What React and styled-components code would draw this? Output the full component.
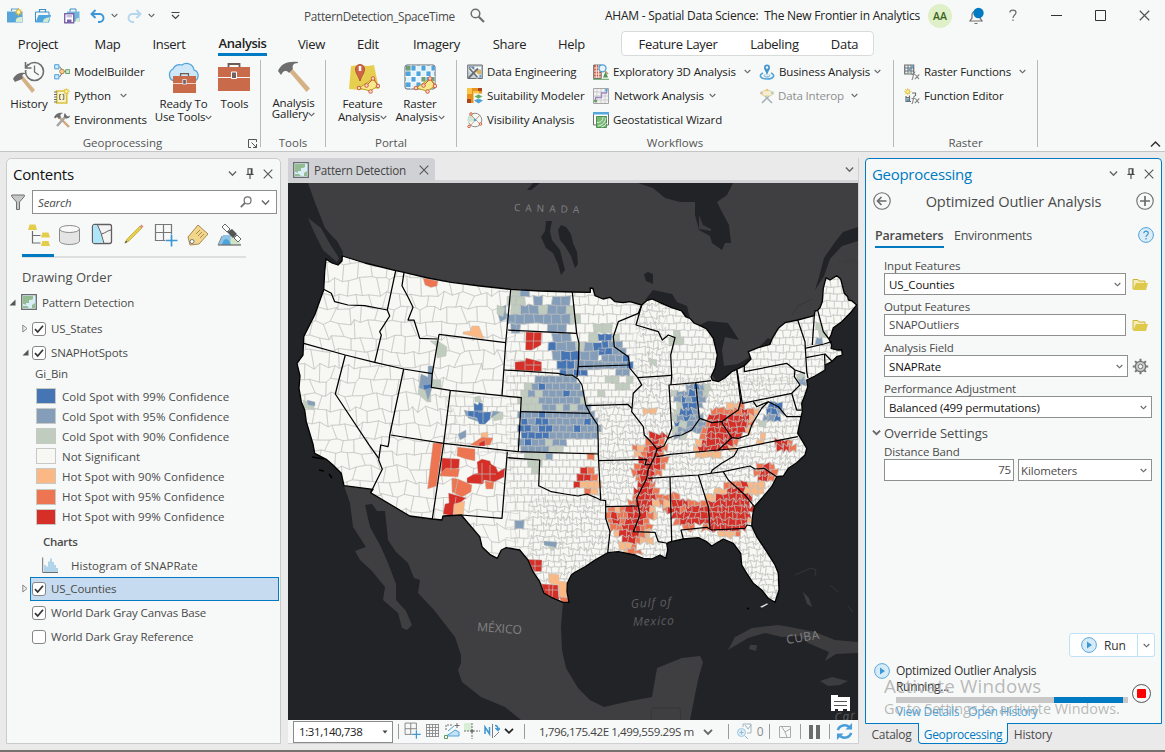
import React from "react";
import styled, { createGlobalStyle, css } from "styled-components";

const Global = createGlobalStyle`
  * { box-sizing: border-box; }
  html, body { margin: 0; padding: 0; }
  body {
    width: 1165px; height: 752px; overflow: hidden;
    font-family: "Open Sans", "Noto Sans", sans-serif;
    font-size: 11.5px; letter-spacing: -0.14px; color: #222; background: #f7f9f8;
  }
  svg { flex: none; }
`;

/* ---------- frame ---------- */
const Window = styled.div`
  width: 1165px; height: 752px; display: flex; flex-direction: column;
  background: #f7f9f8; border-bottom: 2px solid #77716f; white-space: nowrap;
`;
const TitleBar = styled.header`height: 31px; display: flex; align-items: center; flex: none; padding-left: 7px;`;
const Quick = styled.div`display: flex; align-items: center; width: ${p => p.$w}px; height: 31px; flex: none;`;
const ProjectName = styled.div`width: 166px; font-size: 11.8px; letter-spacing: -0.3px; color: #4b4b4b; flex: none;`;
const Portal = styled.div`width: 323px; font-size: 12px; letter-spacing: -0.24px; color: #222; white-space: pre; flex: none; margin-left: 120px;`;
const Avatar = styled.div`
  width: 24px; height: 24px; border-radius: 50%; background: #dff0c8; color: #37611c;
  font-size: 10.5px; font-weight: 600; display: grid; place-items: center; flex: none; letter-spacing: 0;
`;
const WinButton = styled.div`width: ${p => p.$w || 44}px; display: grid; place-items: center; flex: none;`;

const TabStrip = styled.nav`height: 29px; display: flex; flex: none;`;
const Tab = styled.div`
  display: flex; justify-content: center; align-items: center; flex: none; height: 26px;
  width: ${p => p.$w}px; margin-left: ${p => p.$gap}px; font-size: 13px; letter-spacing: -0.3px;
  ${p => p.$on && css`font-weight: 600; height: 25px; border-bottom: 3px solid #007ac2; letter-spacing: -0.4px; padding-top: 2px;`}
`;
const ContextTabs = styled.div`
  margin-left: 36px; width: 253px; height: 25px; display: flex; background: #fff;
  border: 1px solid #d9dbda; border-radius: 4px; align-self: flex-start;
`;
const ContextTab = styled(Tab)`height: 23px;`;

const Ribbon = styled.div`height: 92px; display: flex; flex: none; border-bottom: 1px solid #c4c4c4; position: relative;`;
const Group = styled.section`width: ${p => p.$w}px; height: 87px; display: flex; flex-direction: column; flex: none; border-right: 1px solid #b9b9b9; position: relative;`;
const GroupBody = styled.div`height: 73px; display: flex; flex: none;`;
const GroupName = styled.div`height: 18px; line-height: 18px; margin-top: 1px; text-align: center; color: #555; letter-spacing: 0; padding-right: ${p => p.$shift || 0}px;`;
const BigButton = styled.div`
  width: ${p => p.$w}px; margin-left: ${p => p.$ml || 0}px; display: flex; flex-direction: column; align-items: center; flex: none;
  text-align: center; padding-top: 1px;
`;
const BigText = styled.div`margin-top: ${p => p.$t ?? 3}px; line-height: ${p => p.$lh || 13}px; white-space: pre;`;
const Column = styled.div`width: ${p => p.$w}px; margin-left: ${p => p.$ml || 0}px; flex: none;`;
const SmallButton = styled.div`
  height: 24px; display: flex; align-items: center; padding-bottom: 1px; color: ${p => (p.$off ? "#8d8d8d" : "#222")};
  span { width: ${p => p.$tw || "auto"}; margin-left: ${p => p.$tm || 4}px; flex: none; }
`;
const Launcher = styled.div`position: absolute; right: 3px; bottom: -1px; line-height: 0;`;
const Collapse = styled.div`position: absolute; right: 4px; bottom: 3px; line-height: 0;`;

const Workspace = styled.main`height: 598px; flex: 1; display: flex; background: #eaeaea; padding: 6px 3px 6px 6px;`;

/* ---------- contents pane ---------- */
const Contents = styled.aside`width: 275px; border: 1px solid #cbcbcb; border-radius: 5px 5px 0 0; background: #f7f9f8; flex: none; color: #4b4b4b;`;
const PaneHead = styled.div`height: 29px; display: flex; align-items: center; padding: 0 ${p => p.$r}px 0 6px;`;
const PaneTitle = styled.div`font-size: 15px; letter-spacing: -0.3px; color: ${p => p.$c || "#111"}; flex: 1;`;
const HeadIcons = styled.div`display: flex; gap: 9px; align-items: center; line-height: 0;`;
const SearchRow = styled.div`display: flex; align-items: center; height: 28px; padding-left: 4px;`;
const SearchBox = styled.div`
  width: 245px; height: 24px; margin-left: 7px; border: 1px solid #8e8e8e; background: #fff; display: flex; align-items: center;
  padding: 0 6px 0 5px; font-style: italic; span { flex: 1; } svg { margin-left: 9px; }
`;
const ViewTabs = styled.div`display: flex; gap: 6px; height: 42px; margin-left: 15px; width: 224px; border-bottom: 2px solid #dedfdf; padding-top: 5px;`;
const ViewTab = styled.div`width: 26px; flex: none; display: flex; justify-content: center; height: 36px; padding-top: 2px; padding-left: 1px; ${p => p.$on && css`width: 32px; margin-right: -4px; border-bottom: 3px solid #007ac2;`}`;
const OrderTitle = styled.div`font-size: 13px; margin: 8px 0 0 15px; height: 22px; line-height: 22px; letter-spacing: 0.02px;`;
const Tree = styled.div`padding-left: 1px;`;
const Node = styled.div`height: ${p => p.$h || 24}px; display: flex; align-items: center; padding-left: ${p => p.$in}px; gap: ${p => p.$g || 0}px;`;
const Twist = styled.div`width: 10px; line-height: 0; flex: none;`;
const Check = styled.div`width: 14px; height: 14px; border: 1px solid #868686; border-radius: 3px; background: #fff; display: grid; place-items: center; flex: none; line-height: 0; margin: 1px 5px 0 0;`;
const Selected = styled.div`
  height: 24px; display: flex; align-items: center; width: 249px; border: 1px solid #007ac2; background: #c6dbef; padding-left: 1px; margin-left: -2px;
`;
const SubHead = styled.div`padding-left: 27px; height: 22px; line-height: 20px;`;
const Legend = styled.div`height: 20.1px; display: flex; align-items: center; padding-left: 28px; gap: 6px; letter-spacing: 0.02px;`;
const Swatch = styled.div`width: 20px; height: 16px; background: ${p => p.$c}; border: 1px solid #c9c9c4;`;
const Charts = styled.div`padding-left: 35px; margin-top: 3px; height: 24px; line-height: 23px; font-weight: 600; letter-spacing: -0.3px;`;
const HistRow = styled.div`height: 23px; display: flex; align-items: center; padding-left: 34px; gap: 13px; letter-spacing: 0.04px;`;

/* ---------- map pane ---------- */
const MapPane = styled.section`width: 571px; margin-left: 7px; flex: none; display: flex; flex-direction: column; border-right: 1px solid #cfcfd4; border-bottom: 1px solid #cfcfd4;`;
const DocTabs = styled.div`height: 25px; flex: none; display: flex; align-items: center; justify-content: space-between; padding-right: 4px; border-bottom: 3px solid #d3d3d6;`;
const DocTab = styled.div`
  width: 147px; height: 23px; background: #d0d1d5; border-radius: 0 4px 0 0; display: flex; align-items: center; padding-left: 5px; gap: 5px;
  font-size: 11.7px; letter-spacing: -0.25px; color: #444; padding-top: 2px; span { flex: 1; } svg:last-child { margin-right: 6px; }
`;
const Canvas = styled.div`height: 537px; flex: none; line-height: 0; position: relative;`;
const Status = styled.footer`flex: 1; display: flex; align-items: center; background: #f7f9f8; padding-left: 5px;`;
const Scale = styled.div`
  width: 100px; height: 22px; border: 1px solid #8b8b8b; background: #fff; display: flex; align-items: center; justify-content: space-between; padding: 0 4px 0 5px; color: #222; letter-spacing: -0.4px; flex: none;
`;
const Sep = styled.i`width: 1px; height: 15px; background: #9b9b9b; margin: 0 ${p => p.$r || 5}px 0 ${p => p.$l || 5}px; flex: none;`;
const Tools = styled.div`display: flex; gap: 4px; align-items: center; line-height: 0; margin-top: -2px; flex: none;`;
const Count = styled.span`color: #8b8b8b; width: 8px; text-align: center; font-size: 12px; margin-top: 2px;`;
const Coords = styled.div`width: 164px; margin-left: 9px; font-size: 11.6px; letter-spacing: -0.42px; color: #444; flex: none;`;

/* ---------- geoprocessing pane ---------- */
const Dock = styled.section`width: 297px; margin-left: 6px; flex: none; display: flex; flex-direction: column; color: #4b4b4b;`;
const Geo = styled.div`height: 566px; border: 1px solid #007ac2; border-radius: 4px 4px 0 0; background: #f7f9f8; flex: none; display: flex; flex-direction: column;`;
const ToolRow = styled.div`height: 27px; display: flex; align-items: center; justify-content: space-between; padding: 0 7px 1px; font-size: 14.6px; letter-spacing: -0.16px;`;
const ParamTabs = styled.div`display: flex; height: 33px; padding: 10px 7px 0 9px; font-size: 12.5px; letter-spacing: -0.25px; align-items: flex-start; line-height: 21px; svg { margin: 2px 0 0 auto; }`;
const ParamTab = styled.div`height: 23px; margin-right: 10px; width: ${p => p.$w}px; ${p => p.$on && css`font-weight: 600; letter-spacing: -0.2px; border-bottom: 2px solid #007ac2;`}`;
const Form = styled.div`padding: 7px 8px 0 18px; flex: 1;`;
const FieldName = styled.div`height: 18px; line-height: 21px; letter-spacing: -0.12px;`;
const FieldRow = styled.div`display: flex; align-items: center; height: 22px; margin-bottom: 1px; gap: ${p => p.$g || 6}px;`;
const Input = styled.div`
  width: ${p => p.$w}px; height: 22px; border: 1px solid #8f8f8f; background: #fff; display: flex; align-items: center; flex: none;
  justify-content: ${p => (p.$end ? "flex-end" : "space-between")}; padding: 0 4px ${p => (p.$up ? 1 : 0)}px; color: ${p => p.$c || "#111"};
  ${p => p.$end && css`padding-right: 2px;`}
  ${p => p.$tight && css`padding-left: 2px;`}
`;
const Section = styled.div`display: flex; align-items: center; gap: 3px; margin: 6px 0 0 -12px; height: 17px; font-size: 13px; letter-spacing: -0.05px;`;
const RunRow = styled.div`display: flex; justify-content: flex-end; padding-right: 6px;`;
const Run = styled.div`width: 69px; height: 24px; border: 1px solid #bfe2f7; border-radius: 3px 0 0 3px; background: #fff; display: flex; align-items: center; padding-left: 11px; gap: 7px; font-size: 12px; color: #333;`;
const RunMore = styled.div`width: 17px; height: 24px; border: 1px solid #bfe2f7; border-left: 0; background: #fff; display: grid; place-items: center; border-radius: 0 3px 3px 0;`;
const Job = styled.div`height: 66px; margin-left: 8px; display: flex; position: relative; padding-top: 6px;`;
const JobText = styled.div`margin-left: 6px; width: 232px; line-height: 16px; font-size: 12px; color: #333; letter-spacing: -0.3px;`;
const Progress = styled.div`height: 6px; background: #c8c8c8; padding-left: 158px; margin: 2px 0 2px; i { display: block; width: 69px; height: 6px; background: #007ac2; }`;
const Links = styled.div`color: #4ea5dc; display: flex; gap: 9px; line-height: 14px; letter-spacing: -0.36px;`;
const Watermark = styled.div`position: absolute; left: 10px; top: 18px; color: rgba(150,150,150,.66); font-size: 18.8px; line-height: 23px; letter-spacing: .2px; small { display: block; font-size: 14.4px; line-height: 22px; letter-spacing: 0; }`;
const Stop = styled.div`width: 19px; height: 19px; border: 1.5px solid #555; border-radius: 50%; display: grid; place-items: center; margin: 21px 0 0 4px; flex: none; i { width: 9px; height: 9px; background: #f00; border-radius: 1px; }`;
const DockTabs = styled.div`display: flex; height: 20px; font-size: 12px; letter-spacing: -0.25px; line-height: 18px;`;
const DockTab = styled.div`
  padding: 3px 0 0; width: ${p => p.$w}px; display: flex; justify-content: center; margin-top: -1px; height: 21px;
  ${p => p.$on && css`color: #007ac2; background: #f7f9f8; border: 1px solid #007ac2; border-top: 0; border-radius: 0 0 4px 4px; letter-spacing: -0.35px;`}
`;

/* ---------- icons ---------- */
const G = "#6e6e6e";
const Chev = ({ s = 7, c = "#666", w = 1.3 }) => (
  <svg width={s} height={s} viewBox="0 0 8 8" fill="none" stroke={c} strokeWidth={w}><path d="M.8 2.3 4 5.5 7.2 2.3" /></svg>
);
const Svg = ({ s = 16, h, vb = "0 0 16 16", children }) => (
  <svg width={s} height={h || s} viewBox={vb} fill="none">{children}</svg>
);
const Close = ({ s = 10 }) => <Svg s={s} vb="0 0 10 10"><path d="M.7.7 9.3 9.3M9.3.7.7 9.3" stroke="#555" strokeWidth="1.1" /></Svg>;
const Pin = () => <Svg s={8} h={11} vb="0 0 8 11"><path d="M2 .7h4v5.6H2zM.4 6.5h7.2M4 6.5V11M5.3.7v5" stroke="#444" strokeWidth="1.1" /></Svg>;
const Case = ({ children }) => <><path d="M0 3.500h15.500v11H0z" fill="#55a5da" /><path d="M4.500 3V1h6v2" stroke="#55a5da" strokeWidth="1.2" />{children}</>;
const NewProject = () => (
  <Svg><Case>
    <path d="M9 14c-1-3 1-5 6-5v5z" fill="#d8ecd0" />
    <path d="M11.500 0v8M7.500 4h8M8.700 1.200l5.600 5.600M14.300 1.200 8.700 6.800" stroke="#e2b93e" />
    <circle cx="11.500" cy="4" r="2.300" fill="#fff3b0" stroke="#d7b33c" />
  </Case></Svg>
);
const OpenProject = () => <Svg><path d="M.500 14V4h13.500v3" stroke="#3d8fc6" /><path d="M4.500 4V1.500h6V4" stroke="#3d8fc6" strokeWidth="1.2" /><path d="M.500 14.500 3.500 7H16l-2 7.500z" fill="#4fa6de" /><path d="M8 14c0-3 2-4 7-5l-2 5z" fill="#cfe8cf" /></Svg>;
const SaveProject = () => <Svg><path d="M3 3.500h12.500v10H3z" fill="#72b4df" /><path d="M6 3.500V1h6v2.500" stroke="#3d8fc6" /><path d="M12 14c-1-3 1-4 3-4v4z" fill="#d8ecd0" /><path d="M.700 5.700h9v9h-9z" fill="#fff" stroke="#7c64ab" strokeWidth="1.4" /><path d="M2.500 6.500h5.500v3H2.500z" fill="#c9bde0" /><path d="M3 11.500h4.500v3H3z" fill="#7c64ab" /></Svg>;
const Undo = ({ c = "#3d97d6", flip }) => <Svg s={15} h={14} vb="0 0 15 14"><g transform={flip ? "translate(15 0) scale(-1 1)" : undefined}><path d="M5.500 1 1.500 5l4 4M2 5h7.500a4 4 0 0 1 0 8H8" stroke={c} strokeWidth="1.9" /></g></Svg>;
const Search = ({ s = 15, flip }) => <Svg s={s} vb="0 0 15 15"><g transform={flip ? "translate(15 0) scale(-1 1)" : undefined}><circle cx="5.500" cy="5.500" r="4.300" stroke={G} strokeWidth="1.5" /><path d="m8.700 8.700 5.300 5.300" stroke={G} strokeWidth="2.2" /></g></Svg>;
const Hammer = ({ s = 32 }) => <Svg s={s} vb="0 0 32 32"><path d="M11.500 11 15 8.500 32 27.500 28.500 31z" fill="#d5b186" /><path d="M0 10C3 3 9 0 20 1v1c-5 0-6 3-5 6l-4 4c-2-3-5-2-6-1L3 14z" fill={G} /></Svg>;
const History = () => <Svg s={33} h={32} vb="0 0 33 32"><circle cx="21.500" cy="10.500" r="9" stroke={G} strokeWidth="1.6" /><path d="M21.500 4.500V11l4.300 3" stroke={G} strokeWidth="1.3" /><path d="M11 0v7h7" stroke="#f7f9f8" strokeWidth="4" /><path d="M12.500 1v6h6M12.500 7l3-4" stroke={G} strokeWidth="1.6" /><path d="m7 17 3-2 12 14-3 3z" fill="#d5b186" /><path d="M0 18c2-4 6-7 12-6v1c-3 0-3 2-2 4l-3 2-3 1-2 1z" fill={G} /></Svg>;
const Model = () => <Svg><path d="M5.500 2.500 9 7M5.500 13 9 8M9 7.500h3" stroke={G} /><path d="M.700.700h4.200v4.200H.700zM.700 10.700h4.200v4.200H.700z" fill="#cfeafc" stroke="#4aa0d9" /><circle cx="8" cy="7.500" r="2.300" fill="#f6cf9a" stroke="#b9864d" /><path d="M11.700 5.700h4v3.800h-4z" fill="#d5ead1" stroke="#5c9e60" /></Svg>;
const Star = ({ x, y }) => <g transform={`translate(${x} ${y})`}><path d="M0-3.700v7.400M-3.700 0h7.400M-2.600-2.600l5.200 5.200M2.600-2.600l-5.200 5.200" stroke="#e3cb62" strokeWidth=".9" /><circle r="1.900" fill="#fff2a0" stroke="#d9ba33" strokeWidth=".9" /></g>;
const Python = () => <Svg><path d="M2.700 3h10v12h-10z" fill="#faf3cd" stroke="#d9c23c" strokeWidth="1.7" /><path d="M0 4h3M0 6.500h3M0 9h3M0 11.500h3M0 14h3" stroke={G} /><path d="M7 6.500H5.700v5H7M8.500 6.500h1.300v5H8.500" stroke="#6b6650" /><Star x={12.3} y={3.4} /></Svg>;
const Env = () => <Svg><path d="m5 5 10 10" stroke="#d0a678" strokeWidth="2.4" /><path d="M12 4 3 14" stroke="#a5a5a5" strokeWidth="2.6" /><path d="M0 5C2 1 6 0 9 1 6 2 6 4 7 5L5 7 3 5 1 6.500zM11 1c-2 2-1 5 1 5.500s4-1 4-3l-2 1-2-1.500z" fill={G} /></Svg>;
const Box = () => <><path d="M10.500 4V1h11v3" stroke="#6d5a54" strokeWidth="1.8" /><path d="M0 4h32v10H0zM0 15h32v13H0z" fill="#c96a4b" /><path d="M13.500 9h5v6.500h-5z" fill="#6d6260" stroke="#fff" /></>;
const Ready = () => <Svg s={34} h={32} vb="0 0 34 32"><path d="M7 20a6.500 6.500 0 0 1-1-12 7 7 0 0 1 9-4 7.500 7.500 0 0 1 12 5 6 6 0 0 1 1 11" fill="#cfe8f9" stroke="#4da3d8" strokeWidth="1.2" /><g transform="translate(6 12) scale(.72)"><Box /></g></Svg>;
const Toolbox = () => <Svg s={33} h={32} vb="0 -2 33 32"><Box /></Svg>;
const Net = () => <g stroke="#cf5a3c" fill="#fbd9c6"><path d="M13 27 28 17l4 8-8 5z" stroke="#b8a222" fill="#f5e98b" /><path d="m26 19-5 5M28 19l3 4" /><circle cx="13" cy="27" r="1.800" /><circle cx="20.500" cy="24.500" r="1.800" /><circle cx="27" cy="17.500" r="1.800" /><circle cx="32" cy="25" r="1.800" /><circle cx="24.500" cy="30.500" r="1.800" /></g>;
const Feature = () => <Svg s={34} h={33} vb="0 0 34 33"><path d="m5 5 8-1 9 1 6-1 5 24-9-1-9 2-12-1z" fill="#e6cf4e" /><path d="M14 20c-2-6-4.500-8-4.500-12a4.500 4.500 0 0 1 9 0c0 4-2.500 6-4.500 12z" fill="#cf6548" stroke="#b95338" /><path d="M14 5v5" stroke="#fff" strokeWidth="2.5" /><Net /></Svg>;
const Raster = () => <Svg s={34} h={33} vb="0 0 34 33"><rect x="2" y="4" width="30" height="24" rx="2" fill="#e4f2fb" stroke="#5d6b74" /><path d="M8 5h5v5H8zM18 5h5v5h-5zM28 5h3.500v5H28zM3 10h5v5H3zm10 0h5v5h-5zm10 0h5v5h-5zM8 16h5v5H8zM23 16h5v5h-5zM3 21h5v5H3zM13 21h5v5h-5z" fill="#4ea4dd" /><path d="M3 5h5v5H3zM18 16h5v5h-5zM28 16h3v4h-3z" fill="#6f9f76" /><path d="M8 4v24M13 4v24M18 4v24M23 4v24M28 4v24M2 10h30M2 15.500h30M2 21h30" stroke="#fff" strokeWidth=".8" /><Net /></Svg>;
const DataEng = () => <Svg><path d="M.700 1h14.600v13.500H.700z" fill="#c3d3df" stroke={G} /><path d="M2 2.500h5v3H2z" fill="#67839a" /><path d="M8 3h6v2H8z" fill="#fff" /><path d="M10 6h4v4h-4z" fill="#ddb451" /><path d="M10 11h4v2.500h-4z" fill="#5aa0cd" /><path d="m2.500 4.500 9 9" stroke="#eee" strokeWidth="4" /><path d="m2.500 4.500 8 9M11 4.500 1.500 14" stroke={G} strokeWidth="1.800" /></Svg>;
const Suit = () => <Svg><path d="M0 0h15v15H0z" fill="#e9911e" /><path d="M0 0h5v6H0zM6 3h6v3H6z" fill="#f9c546" /><path d="M0 11h4v4H0zM11 0h4v3h-4z" fill="#a8471b" /><path d="M6.500 5.500H16V16H6.500z" fill="#f7f9f8" /><path d="m7 12.500 4.500-2 4.500 2-4.500 3z" fill="#4da3d8" /><path d="m7 8.500 4.500-2.500L16 8.500 11.500 11z" fill="#65ad5e" stroke="#fff" strokeWidth=".6" /></Svg>;
const Visib = () => <Svg><circle cx="8" cy="8" r="6.800" stroke="#8d8d8d" fill="#f5faf5" /><path d="M1 8a6 6 0 0 1 4-6l3 6-7 3z" fill="#cfe5cf" /><path d="m4 3 9 9M13 3 2 15" stroke="#c78273" strokeWidth=".8" /><circle cx="8" cy="8" r="1.300" fill="#4da3d8" /><g fill="#fbd9c6" stroke="#cf5a3c" strokeWidth=".9"><circle cx="4" cy="2" r="1.300" /><circle cx="2" cy="14.500" r="1.300" /><circle cx="13.500" cy="12" r="1.300" /></g></Svg>;
const Explore = () => <Svg><path d="M.700 1h7.500v13.500H.700z" fill="#d05c40" stroke={G} /><path d="M1 4h7M1 7h7M1 10h7M1 13h7M3.300 1v13M5.700 1v13" stroke="#fff" strokeWidth=".8" /><circle cx="9.500" cy="4.300" r="3.500" fill="#e6f3fb" stroke="#4da3d8" strokeWidth="1.300" /><path d="m12 7 3 3" stroke="#c69a6a" strokeWidth="1.600" /><path d="m12.500 7.500 2.500 6h-5z" fill="#4f9657" /><path d="M0 15.300h16" stroke="#5f9e64" /></Svg>;
const Network = () => <Svg><path d="M.500.500h15v15H.500z" fill="#f3f3f3" stroke="#a5a5a5" /><path d="M4 1v14M8 1v14M12 1v14M1 4h14M1 8h14M1 12h14" stroke="#cdcdcd" /><path d="M2.500 13V9.500h6V5h5V2.500" stroke="#9d8ac0" strokeWidth="1.300" /><circle cx="13.500" cy="2" r="1.300" fill="#4da3d8" /><circle cx="2.500" cy="13" r="1.500" fill="#5a9c5d" /></Svg>;
const Geostat = () => <Svg><path d="M.500.500h15V13H.500z" fill="#fff" stroke={G} /><path d="M0 0h16v2.500H0z" fill="#56a7dc" /><path d="M3.500 4.500h10v11h-10z" fill="#7ab876" stroke="#4d9150" /><path d="M4 10.500c4 0 6-2 6-5.500M5 14c5-1 7-4 8-8M8.500 15c3-1 4-2 5-4" stroke="#e3f2e0" /></Svg>;
const Business = () => <Svg><path d="M12 9c5 2 2.500 6-4 6S-1 11 4 9" stroke="#4da3d8" strokeWidth="1.500" /><path d="M6 10.500c-2 1.500 0 2.500 2 2.500s4-1 2-2.500" stroke="#4da3d8" /><path d="M8 12C7 7 5 6 5 3.500a3 3 0 0 1 6 0C11 6 9 7 8 12z" fill="#4595ce" /><circle cx="8" cy="3.500" r="1.200" fill="#fff" /></Svg>;
const Interop = () => <Svg><path d="m6 8 7 7M10 8l-7 7" stroke="#a8b2b8" strokeWidth="1.600" /><path d="M2 6c1-5 11-5 12 0l-3 2H5z" fill="#f5edcf" stroke="#d8c897" strokeWidth=".8" /><circle cx="2.500" cy="5" r="1.400" fill="#e3b4a6" /><circle cx="13.500" cy="5" r="1.400" fill="#b6cfb0" /><circle cx="8" cy="2" r="1.300" fill="#f0c981" /></Svg>;
const Fx = () => <path d="M7.500 15.700c.8 0 1-.3 1.200-1.300l1-5c.2-1 .6-1.400 1.500-1.300M7.500 10.500h3.300M11.300 10.500l3.700 4.600M15.300 10.500l-4.500 4.600" stroke="#858585" strokeWidth="1.100" />;
const RFun = () => <Svg><path d="M.700 1h9v9h-9z" fill="#e9f1f5" stroke={G} strokeWidth="1.200" /><path d="M1 4h9M1 7h9M4 1v9M7 1v9" stroke={G} /><path d="M4.500 4.500h2v2h-2zM7.500 1.500h2v2h-2z" fill="#4da3d8" /><path d="M4.500 7.500h2v2h-2z" fill="#b7d6a9" /><Fx /></Svg>;
const FEd = () => <Svg><path d="M2 8v5.500h5M11.500 8V5H8M2.500 9.500H6M5.500 7.500v6" stroke={G} strokeWidth="1.200" /><path d="M2.700 10.500H5V13H2.700z" fill="#4da3d8" /><Star x={3.7} y={3.7} /><Fx /></Svg>;
const Folder = () => <Svg s={17} h={13} vb="0 0 17 13"><path d="M1 11V1.500h5l1 1.500h6v2" fill="#f5ecb9" stroke="#cdb534" /><path d="M1 12 4 5h12l-2 7z" fill="#dfc94b" /></Svg>;
const Gear = () => <Svg s={17} vb="-8.500 -8.500 17 17"><path d="M0-7.700V7.700M-7.700 0H7.700M-5.400-5.400 5.400 5.400M5.400-5.400-5.400 5.400" stroke="#777" strokeWidth="2" /><circle r="5.200" fill="#c9c9c9" stroke="#777" strokeWidth="1.300" /><circle r="2.200" fill="#f7f9f8" stroke="#777" /></Svg>;
const Play = () => <Svg s={16}><circle cx="8" cy="8" r="7.400" fill="#d6ebf8" stroke="#5aa9dc" /><path d="M6 4.500v7l5-3.500z" fill="#3c97d3" /></Svg>;
const Round = ({ d }) => <Svg s={18} vb="0 0 18 18"><circle cx="9" cy="9" r="8.200" stroke="#6b6b6b" strokeWidth="1.1" /><path d={d} stroke="#6b6b6b" strokeWidth="1.700" /></Svg>;
const MapIcon = () => <Svg><path d="M.700.700h14.600v14.600H.700z" fill="#d9edf6" stroke="#6b6b6b" strokeWidth="1.3" /><path d="M2 2h10v3l-2 1H8v3H5v2l-2-1H2zM2 12h4l2 2H2zM11 11l3-2v5h-3z" fill="#93bd91" /></Svg>;
const Filter = () => <Svg s={14} h={17} vb="0 0 14 17"><path d="M.700 1h12.600v1.500L8.500 8v7.500h-3V8L.700 2.500z" fill="#c7c7c7" stroke={G} /></Svg>;
const Tick = () => <Svg s={10} vb="0 0 10 10"><path d="M1 5.200 3.700 8 9 1.800" stroke="#333" strokeWidth="1.700" /></Svg>;
const Open = () => <Svg s={7} vb="0 0 7 7"><path d="M6.500.500v6h-6z" fill="#555" /></Svg>;
const Shut = () => <Svg s={6} h={9} vb="0 0 6 9"><path d="M.800 1v7l4.200-3.500z" fill="#eee" stroke="#8a8a8a" /></Svg>;
const Layers = () => <Svg s={24} vb="0 0 24 24"><path d="M5.500 8v12h8M5.500 12.500h8" stroke={G} strokeWidth="1.200" /><path d="m1 7 1.500-5.500h6L10 7zM14 14.500l1.500-5h6l1.500 5zM14 23l1.500-5h6l1.500 5z" fill="#e5cd4c" /></Svg>;
const Cyl = () => <Svg s={24} vb="0 0 24 24"><path d="M1.500 6v12c0 2 5 3.500 10 3.500s10-1.500 10-3.500V6" fill="#e4e4e4" stroke="#8b8b8b" /><ellipse cx="11.500" cy="6" rx="10" ry="3.500" fill="#f9f9f9" stroke="#8b8b8b" /></Svg>;
const Sel = () => <Svg s={22} vb="0 0 22 22"><rect x="1.500" y="1.500" width="19" height="19" rx="2" fill="#f4f4f4" stroke="#5f5f5f" strokeWidth="1.300" /><path d="M2.200 2.200H7l3 9 2 8.600H2.200z" fill="#aee6f9" /><path d="m6.500 2 3.500 8 3 10.500M10.500 11c4-1 7-4 9.500-4" stroke="#5f5f5f" /></Svg>;
const Pencil = () => <Svg s={22} vb="0 0 22 22"><path d="m2 20 2-4L17 3l2 2L6 18z" fill="#e6cd4c" stroke="#b49a2a" strokeWidth=".6" /><path d="m16.500 3.500 2-2 2 2-2 2z" fill="#dd8f83" /><path d="m1.500 20.500 1.500-3 1.500 1.500z" fill="#555" /></Svg>;
const GridAdd = ({ s = 24 }) => <Svg s={s} vb="0 0 24 24"><path d="M1.500 1.500h16v16h-16zM9.500 1.500v16M1.500 9.500h16" stroke="#777" strokeWidth="1.200" /><path d="M17.500 11v13M11 17.500h13" stroke="#f7f9f8" strokeWidth="5" /><path d="M17.500 11.500v12M11.500 17.500h12" stroke="#3c97d3" strokeWidth="1.700" /></Svg>;
const Tag = () => <Svg s={24} vb="0 0 24 24"><path d="M2 14 12 2l10 9-9 10-9 1z" fill="#f2d68b" stroke="#a98951" /><path d="m10 11 4-4M12 13l4-4M14 15l4-4" stroke="#a98951" /><circle cx="6" cy="18.500" r="2" fill="#fff" stroke="#777" /></Svg>;
const Sat = () => <Svg s={25} h={24} vb="0 0 25 24"><path d="M1 22 6 12h12l6 10z" fill="#8cc4e8" /><path d="m13 22 1-10h4l6 10z" fill="#cfe3c7" /><path d="M5 22c1-8 7-8 9 0z" fill="#4da3d8" /><path d="M1 22h23" stroke="#6a6a6a" strokeWidth="1.200" /><path d="M1 22 5 13" stroke="#8a8a8a" /><path d="m5 4 3-3 5 5-3 3zM17 15l3-3 4 4-3 3z" fill="#fff" stroke="#666" /><path d="m10 9 5-3 5 5-4 4z" fill="#555" /></Svg>;
const Hist = () => <Svg><path d="M.700.500v15H16" stroke={G} /><path d="M3 15V8M5 15V9.500M7 15V4.500M9 15V1.500M11 15V5M13 15V8M15 15v-4" stroke="#6db0dc" /></Svg>;
const GridI = () => <Svg s={15} vb="0 0 15 15"><path d="M1.500 1v13M4.500 1v13M7.500 1v13M10.500 1v13M13.500 1v13M1 1.500h13M1 4.500h13M1 7.500h13M1 10.500h13M1 13.500h13" stroke="#888" strokeWidth=".9" /></Svg>;
const Snap = () => <Svg><path d="M2 13h13V9l-4-2-4 3z" fill="#c5e3f6" stroke="#4da3d8" /><path d="M2 7V2h7" stroke={G} strokeDasharray="2 1" /><path d="M13 0v5M10.500 2.500h5" stroke={G} /><path d="M.500 12.500h3v3h-3z" fill="#fff" stroke="#5a9c5d" /><path d="m4 8 6-5" stroke="#4da3d8" /></Svg>;
const Cross = () => <Svg><path d="M0 0h8v8H0z" fill="#d9eed6" /><path d="M8 0v16" stroke={G} strokeDasharray="2 1" /><path d="M0 8h16" stroke={G} strokeDasharray="2 1" /><circle cx="8" cy="8" r="1.600" fill={G} /></Svg>;
const North = () => <Svg><path d="M1 11V4l4.500 7V4M11 2.500c3 0 3 2 3 4M11.500 5l2.500 2.500L16 5" stroke="#3c97d3" strokeWidth="1.500" /><path d="M8.500 1v14M10 14l5-5" stroke={G} strokeWidth=".9" /></Svg>;
const Refresh = () => <Svg s={17} vb="0 0 18 18"><path d="M2 7.500c1.500-5.500 9-7 13-2M16 10.500c-1.500 5.500-9 7-13 2" stroke="#4a9fd8" strokeWidth="2.700" /><path d="M17 0v7h-7zM1 18v-7h7z" fill="#4a9fd8" /></Svg>;

/* ---------- map drawing ---------- */
const CLASS = { c99: "#4575b5", c95: "#849eba", c90: "#c0ccbe", ns: "#f7f8f3", h90: "#fab984", h95: "#ed7551", h99: "#d62f27" };
const LEVELS = ["c99", "c95", "c90", "ns", "h90", "h95", "h99"];

const OUTLINE = "326,259 332,263 338,265 342,261 342.3,256 365,263 395.7,270.7 404,272.3 428,278 451.3,282.3 480,286 510.7,289.3 540,291 572.3,292 590.3,292.3 590.3,288 593,288.5 595,295.7 603,299 610,297.3 615,301.7 623,302.7 630,301.7 641.7,305 646.7,300.7 652.3,299 661.7,303.3 671.7,307.7 681.7,311 686,317 690,318.3 694,323 700,325.7 706.7,329 713.3,338.3 717.3,355 715,368.3 711,376.7 712.3,380 718.3,381.7 725,377.7 731.7,371.7 736.7,369.3 744.3,365.7 751,359 748.3,351.7 758.3,347.7 770,344.3 772.3,338.3 778.3,328.3 785,322.7 797.7,320 814.3,315.7 815,311 817.7,310.3 820,307.7 822.3,301.7 823.3,288.3 826,277.7 830,280 836.7,275.7 840.7,279 844.3,293.3 847.7,296.7 848.3,300 851.7,300.7 856.7,305 850,313.3 841.7,321.7 833.3,327.7 831,335 829,339 831.7,345 831,348.3 836.7,350 841.7,350 842.3,355 836.7,356.7 831.7,361.7 825,365 825,370 815,376 806.7,380 807.7,386.7 805,395 801.7,403.3 802.3,411.7 800,421.7 797.7,433.3 801.7,440 806.7,448.3 805,455 796.7,462.7 788.3,468.3 783.3,476 776.7,476.7 771.7,486.7 761.7,498.3 754.3,506.7 752.7,515 751.7,526 756.7,536.7 766.7,551.7 775,565 778.3,573.3 779,590 775,602.3 768.3,598.3 761.7,590 753.3,583.3 746.7,573.3 741.7,565 740.7,553.3 733.3,543.3 723.3,539 711.7,546 706.7,541.7 698.3,537.7 683.3,539 671,541.7 666.7,543.3 667.7,550 665.7,558.3 660,555 651.7,559 643.3,558.3 635,555 618.3,551.7 607.7,552.7 595,560 585,566.7 575,572.3 571.3,575 567.3,583.3 567,592 569,602.3 563,602.3 551.3,597.3 544,593.3 539.7,581.7 533,571.7 528,560 519.7,550 506.3,547.7 501.3,550 497.3,558.3 489.7,554.3 482,546.7 479.7,536.7 469.7,525 461.3,515 443,516 442,520 432.3,519 409.7,516 370.7,492.7 373,489.3 344,485.7 341.3,473.3 333,465 326.3,459.3 314.7,453.3 313,444 306.3,421.7 304.7,410 301.3,401.7 299,388.3 300,376 297,363.3 303,355 303.7,336.7 314.7,315 323.7,290 324.7,271.7";

const BORDERS = [
  "323.7,289.3 331.3,293.3 334.7,301.7 348,305 364.7,305.7 387.3,310",
  "395.7,270.7 387.3,310 389.7,316 379.7,331.7 381.3,335 374.7,362.3",
  "303.7,343.3 345.3,355 374.7,362.3 403.7,369 432.3,373.7",
  "404,272.3 402,285.7 408,297 413,307.3 408,320 414,320 419.7,338.3 437.3,339",
  "439,334.3 432.3,373.7 431.3,387.3 450.3,390.3 501.3,395.7 521.3,397.7 518.3,451.7",
  "439,334.3 505.7,342.7", "510.7,289.3 505.7,342.7 502,395.7", "508,330 576.7,333.3",
  "504,370 558,373.3 564.7,375 572,375 578,379 582,385 585.7,405 590,413.3 597.7,425 598.3,445 598.3,454 600.7,500 605.7,500.7 605.7,518.3 610,531.7 607.7,552.7",
  "403.7,369 389.7,435 389,441.7 388,446.7 380.7,445 378.7,460 382.3,469.3 375.3,483.3 370.7,492.7",
  "345.3,355 335.3,394 368.7,444.3 378.7,458.3", "390.7,435 443.7,443.3 518,451.7 598.3,454",
  "450.3,390.3 443.7,443.3 432.3,519", "520.7,411.7 590,413.3", "507.3,451.7 502,518.3 461.3,515",
  "507.3,457.7 539.7,460 538.7,485.7 551.3,491.7 565,494 578,496 587,494 595,497.3 600.7,500",
  "599,460.7 646.7,459.3 645,465 651.7,464",
  "572.3,292 574.7,315 576.7,333.3 579,343.3 578.3,365 577,377", "578.3,366.7 629.3,365", "585.7,405.7 627.7,404.3 631.7,408.3",
  "641.7,305 638.3,313.3 618.3,321.7 613.3,336.7 614.3,346.7 628.3,356.7 630,368.3 637.7,377.7 641.7,385 633.3,393.3 631.7,411.7 643.3,426.7 644.3,435 652.3,443.3 657,449 655,456 648,470 646.7,478.3 636.7,498.3 640,515 633.3,531.7 655,532.3 658.3,541.7 666,543",
  "641.7,305 636,325 658.3,331.7 662.3,340 668.3,335 675,337.7 670.7,355 671.7,375.3 671,385", "637.7,377.7 671.7,375.3",
  "711,380.7 695.7,382.7 669,385 671.7,428.3 667.7,438.3 664,446 657,449", "695.7,382.7 699.3,418.3",
  "667.7,438.3 674,436 681.7,435 691.7,430 700,418.3 711.7,422.7 721.7,421.7 728.3,416.7 738.3,410 740.7,401.7 736.7,369.3",
  "744.3,365.7 744.3,371.7 786.7,363.3 795,370 805,373.3", "737,370 742.3,403.3 791.7,393.3 800,385 794.3,376.7 795,370",
  "753.3,401.7 756.7,406.7 768.3,401.7 761.7,408.3 751.7,425 748.3,435 738.3,438.3 731.7,437.7 723.3,425 721.7,421.7",
  "731.7,437.7 718.3,450", "656.7,456.7 670,454.3 718.3,450 738.3,448.3 797.7,436.7",
  "768.3,401.7 778.3,406.7 786.7,416.7 801.7,416.7", "791.7,393.3 796.7,410 801.7,410",
  "648.3,478.3 698.3,475 723.3,471.7 750,466 755,469 764,468.3 776.7,476.7",
  "738.3,448.3 734,456 721.7,463.3 712.3,470 711,473", "723.3,471.7 728.3,480 745,495 754.3,506.7",
  "670,477.3 671.7,541.7", "698.3,475 708.3,506.7 710,528.3", "683.3,539 681,530 706.7,527.3 711.7,530 745,528.3 747,525 751.7,526",
  "605.7,506.7 638.3,506", "797.7,320 805,341.7 806.7,371.7 808,378", "814.3,315.7 812.3,345", "805,348.3 824,344 831.7,341.7",
  "817.7,310.3 823.3,331.7 829,339", "806,357.7 825,354 831.7,361", "824.5,354 825,365",
];

/* [class, polygon] in drawing order; later entries win */
const ZONES = [
  ["c90", [511, 288, 522, 290, 520, 314, 509, 312]], ["c90", [556, 297, 574, 297, 576, 318, 568, 332, 556, 330]], ["c95", [520, 290, 530, 290, 530, 299, 520, 297]],
  ["c95", [501, 329, 505, 312, 524, 310, 534, 298, 545, 300, 547, 322, 530, 320, 520, 330]], ["c95", [546, 314, 558, 304, 569, 304, 570, 330, 548, 332]],
  ["c90", [588, 328, 600, 325, 615, 331, 620, 345, 630, 348, 628, 358, 590, 345]],
  ["c95", [577, 340, 590, 346, 597, 334, 606, 329, 615, 340, 630, 352, 631, 367, 577, 368]], ["c99", [597, 338, 606, 333, 613, 350, 609, 357, 597, 353]], ["c99", [620, 353, 629, 356, 629, 365, 620, 363]],
  ["c95", [548, 333, 569, 334, 578, 348, 577, 378, 560, 374, 548, 358, 548, 346]], ["c99", [559, 350, 575, 352, 578, 378, 562, 374]],
  ["c90", [606, 366, 628, 366, 632, 385, 628, 393, 620, 390, 608, 380]], ["c95", [612, 365, 628, 365, 627, 377, 613, 374]], ["c99", [575, 366, 588, 367, 588, 378, 576, 379]], ["c90", [596, 387, 610, 387, 610, 394, 596, 394]],
  ["c90", [522, 384, 532, 380, 546, 398, 540, 412, 520, 410]], ["c95", [529, 384, 545, 374, 562, 376, 579, 380, 588, 405, 590, 413, 540, 412, 540, 402, 530, 396]],
  ["c99", [560, 388, 570, 391, 570, 400, 560, 398]], ["c90", [557, 402, 566, 402, 566, 411, 557, 411]],
  ["c95", [520, 410, 590, 413, 600, 426, 596, 436, 575, 440, 562, 434, 558, 454, 524, 454, 518, 444]], ["c99", [524, 418, 551, 418, 548, 438, 524, 440]], ["c99", [574, 414, 594, 424, 588, 430, 576, 422]], ["c90", [552, 438, 565, 438, 562, 454, 552, 454]], ["c99", [525, 441, 532, 441, 530, 452, 525, 452]],
  ["c90", [516, 453, 540, 454, 556, 456, 556, 460, 540, 460, 538, 471, 526, 470, 526, 458]], ["c90", [511, 517, 528, 517, 528, 523, 511, 523]], ["c95", [516, 524, 522, 524, 522, 532, 516, 532]],
  ["c90", [672, 390, 680, 386, 712, 386, 710, 396, 700, 412, 700, 430, 680, 440, 670, 430, 676, 410]], ["c95", [676, 390, 698, 384, 706, 390, 702, 400, 700, 416, 704, 426, 696, 432, 680, 435, 675, 420]], ["c99", [682, 396, 686, 392, 689, 402, 687, 420, 681, 420]], ["c99", [690, 386, 699, 386, 699, 393, 690, 396]],
  ["c90", [673, 332, 683, 334, 683, 344, 673, 344]], ["c90", [651, 362, 657, 362, 657, 371, 651, 371]],
  ["c90", [757, 418, 766, 414, 775, 420, 765, 425, 757, 424]], ["c95", [764, 408, 776, 399, 785, 408, 777, 424, 766, 419]], ["c99", [768, 405, 779, 404, 779, 420, 768, 416]],
  ["c90", [817, 325, 830, 328, 826, 338, 817, 336]], ["c95", [816, 332, 823, 332, 823, 344, 816, 344]], ["c95", [798, 376, 803, 376, 803, 388, 798, 386]], ["c90", [812, 360, 818, 360, 818, 368, 810, 368]],
  ["h90", [712, 410, 720, 407, 748, 402, 757, 411, 751, 425, 742, 440, 738, 446, 722, 454, 694, 458, 694, 446, 704, 430]],
  ["h95", [714, 411, 752, 407, 751, 424, 740, 441, 732, 447, 718, 454, 698, 452, 702, 434]], ["h99", [717, 413, 735, 414, 750, 409, 747, 424, 739, 438, 728, 447, 714, 453, 701, 448, 705, 432, 714, 422]],
  ["h90", [643, 411, 653, 411, 653, 416, 643, 416]],
  ["h95", [646, 443, 651, 432, 662, 430, 668, 444, 664, 470, 655, 478, 660, 498, 654, 512, 650, 536, 640, 546, 636, 558, 622, 552, 620, 540, 606, 524, 606, 506, 630, 504, 636, 488, 634, 470, 642, 458]],
  ["h95", [631, 444, 640, 444, 641, 456, 633, 455]], ["h90", [640, 446, 644, 446, 643, 458, 634, 456]], ["h90", [622, 544, 631, 542, 630, 552, 622, 552]], ["h90", [644, 534, 653, 532, 652, 542, 642, 540]], ["h90", [612, 530, 624, 528, 624, 536, 612, 536]],
  ["h99", [652, 432, 664, 430, 668, 440, 662, 450, 661, 468, 650, 480, 655, 496, 650, 510, 642, 516, 641, 532, 628, 544, 622, 534, 628, 518, 622, 508, 634, 502, 637, 482, 642, 462, 650, 446]],
  ["h99", [610, 512, 618, 512, 620, 524, 612, 522]],
  ["h95", [655, 500, 664, 496, 672, 498, 672, 512, 658, 508]], ["h90", [651, 503, 658, 503, 656, 516, 650, 516]],
  ["h95", [670, 497, 682, 496, 690, 502, 704, 500, 712, 494, 726, 484, 735, 481, 750, 486, 757, 496, 752, 506, 752, 518, 745, 528, 738, 538, 722, 534, 710, 532, 698, 527, 686, 530, 670, 520]],
  ["h90", [704, 494, 716, 490, 728, 484, 720, 500, 706, 504]], ["h90", [748, 514, 753, 510, 752, 526, 746, 526]], ["h90", [717, 531, 738, 531, 738, 540, 720, 536]],
  ["h99", [669, 499, 684, 498, 694, 504, 709, 504, 711, 522, 700, 527, 690, 526, 670, 518]], ["h99", [706, 505, 716, 496, 732, 485, 746, 488, 753, 500, 748, 520, 744, 530, 706, 532]],
  ["h90", [744, 488, 756, 478, 768, 486, 760, 494, 752, 496]], ["h95", [752, 472, 766, 460, 774, 464, 778, 472, 772, 484, 756, 484]], ["h99", [757, 472, 766, 462, 773, 470, 769, 480, 756, 482]],
  ["h95", [774, 438, 795, 438, 795, 452, 782, 454]], ["h99", [777, 437, 789, 437, 790, 454, 780, 453]], ["h90", [759, 436, 764, 436, 764, 443, 758, 443]],
  ["h90", [574, 478, 588, 474, 598, 480, 600, 496, 590, 494, 578, 488]], ["h95", [580, 472, 596, 468, 596, 478, 584, 482, 576, 488]], ["h99", [578, 471, 585, 469, 588, 478, 580, 478]], ["h95", [589, 455, 594, 455, 594, 466, 589, 466]],
];
const PATCHES = [
  ["h95", "423,278 438,281 437,286 431,287.5 425,285"], ["h90", "463,332 470,331 472,326 479,326 484,339 463,334"],
  ["h99", "526,332 541.5,332.5 541,345 532,350 525.5,350"], ["h99", "515,362 525,361 526,358 534,360 541.5,362 541.5,371.5 515,370"],
  ["c90", "430,341 438,341 447,347 446,356 437,358 436,346"], ["c90", "432,380 441,380 441,388 431.5,387"],
  ["c90", "420,376 418,394 427,402 431,402 430,388"], ["c95", "428,366 433,366 432,388 428,401 425,390 419,388 421,374 428,377"], ["c99", "423,385 431,384 431,388 424,390"],
  ["c95", "497,310 506,305 506,319 500,322"], ["c90", "497,305 505,308 503,317 497,314"],
  ["c90", "303,400 314,404 314,410 304,408"], ["c95", "307,400 315,402 315,406 308,405"],
  ["c90", "475,397 480,396 482,402 475,402"], ["c90", "491,411 503,412 503,419 494,421"], ["c95", "464,410 468,411 468,418 485,424 491,418 500,412 493,411 490,420 484,422 479,419 466,416"], ["c99", "468,411 474,411 474,403 478,405 479,402 483,404 483,412 491,412 490,419 485,424 479,424 477,418 468,416"], ["c95", "458,434 466,430 466,437 460,440"],
  ["h90", "481,433 488,432 488,437 481,437"], ["h95", "470,445 482,437 493,438 490,445 478,446"], ["h99", "479,443 485,440 485,446 479,446"],
  ["h95", "433,443 442.5,443 436.5,486 427.5,489"], ["h99", "442,458 459.5,459 459,468 451,470 441,476"], ["h95", "440,474 446,468 459.5,469 458,477 440,476"],
  ["h95", "457.5,447 475,449 475,461 466,459 457,456"], ["h99", "477,462 482,459 490,461 491,464 496,467 498,472 505,468 504,477 494,482 484,480 483,484 467,483 467,478 474,474 478,473"], ["h95", "485,481 494,482 493,489 486,489"],
  ["h95", "452,478 458,479 472,485 471,492 462,497 452,492"], ["h99", "448.5,493 466,498 460,503 454,505 453,516 443,514 445,504 449,503"], ["h90", "454,504 465,501 463,515 454,516"],
  ["h99", "528,559.5 542,560 541.5,571.5 534,571.5"], ["h99", "541.5,584 558,585 559,600 545,595"], ["h90", "549,574 559,574.5 559,581 567,582 567,597 559,597 558,585 549,583"], ["h95", "559,597 569,598 569,603 562,602"],
  ["c95", "544,541 557,542 556,548 544,545"], ["c90", "548,546 555,547 552,551"],
];
const PATCH_LINES = "M534 332l-1 18M526 341h15M534 361l-.5 10M526 365h15M525 358v12M451 459v11M482 463v20M490 465v18M474 474h22M458 479l-3 14M456 497l-1 7M535 560v12M531 566h11M549 585v12M553 585l-1 13M545 590h13M559 585v12M474 411v7M483 404v19M478 412h8M474 411h9";

const rnd = (a, b, s) => {
  const v = Math.sin(a * 127.1 + b * 311.7 + s * 74.7) * 43758.5453;
  return v - Math.floor(v);
};
const inside = (x, y, p) => {
  let hit = false;
  for (let i = 0, j = p.length - 2; i < p.length; j = i, i += 2) {
    if (p[i + 1] > y !== p[j + 1] > y && x < ((p[j] - p[i]) * (y - p[i + 1])) / (p[j + 1] - p[i + 1]) + p[i]) hit = !hit;
  }
  return hit;
};
const meshAt = (x, y) => {
  if (x < 450 && !(x > 405 && y < 342)) return 0;
  if (x < 508 && y > 287) return y > 398 && y < 452 ? 4 : 0;
  if (x < 508) return 0;
  if (y > 500 && x < 530) return 5;
  if (x < 600 && y < 500) return y < 372 ? 4 : 1;
  if (y < 335 && x < 640) return 4;
  if (x < 635 && y < 405) return 1;
  if (y < 380 && x > 665) return 3;
  return 2;
};
/* cell size, jitter and brick offset of each county mesh */
const MESHES = [[14.5, 0.5, 0.03], [7, 0.13, 0.04], [6.1, 0.62, 0.16], [7.3, 0.3, 0.03], [9.2, 0.22, 0.03], [9, 0.15, 0.02]];

function buildCounties() {
  const fills = {};
  let lines = "";
  MESHES.forEach(([step, jit, off], m) => {
    const vert = (k, r) => [
      290 + (k * step) / 2 + (rnd(k, r, m) - 0.5) * step * jit,
      250 + r * step + (((k + r) % 2 ? 1 : -1) * off + (rnd(k, r, m + 9) - 0.5) * jit * 0.8) * step,
    ];
    for (let r = 0; r * step < 360; r++) {
      for (let k = r % 2; (k * step) / 2 < 575; k += 2) {
        const pts = [vert(k, r), vert(k + 1, r), vert(k + 2, r), vert(k + 2, r + 1), vert(k + 1, r + 1), vert(k, r + 1)];
        const cx = 290 + ((k + 1) * step) / 2;
        const cy = 250 + (r + 0.5) * step;
        if (meshAt(cx, cy) !== m) continue;
        const d = "M" + pts.map(p => p[0].toFixed(1) + " " + p[1].toFixed(1)).join("L") + "Z";
        lines += d;
        if (m === 0) continue;
        let cls = null;
        ZONES.forEach(([c, poly]) => { if (inside(cx, cy, poly)) cls = c; });
        if (!cls) continue;
        const n = rnd(k, r, 33);
        let i = LEVELS.indexOf(cls);
        const limit = i === 6 ? 0.98 : 0.92;
        if (n > limit) i += i < 3 ? 1 : -1;
        if (n < 0.08 && i > 0 && i < 6) i += i < 3 ? -1 : 1;
        fills[LEVELS[i]] = (fills[LEVELS[i]] || "") + d;
      }
    }
  });
  return { fills, lines };
}
const COUNTIES = buildCounties();

const MapText = styled.text`font-family: "Open Sans", sans-serif; fill: ${p => p.$c || "#828284"}; font-size: ${p => p.$s || 12}px; letter-spacing: ${p => p.$ls || 0}px; font-style: ${p => (p.$i ? "italic" : "normal")};`;

const WATER = [
  "288,183 308,183 314,200 325,228 331,235 337,241 343,252 342,262 330,275 344,486 350,503 353,527 366,547 355,551 360,560 371,570 385,587 383,600 398,613 402,628 407,630 412,625 406,611 396,600 396,584 388,563 381,547 370,527 365,505 372,504 377,511 385,511 388,540 396,552 408,563 414,578 420,580 418,593 434,610 455,637 461,655 461,663 458,670 462,682 481,697 505,707 521,720 288,720",
  "563,602 561,627 562,650 566,668 578,688 590,700 604,707 630,701 652,697 657,668 682,658 700,656 703,662 698,680 694,700 690,720 858,720 858,306 830,330 760,450 700,500 600,540 570,570",
  "638,183 653,188 665,198 680,202 695,202 695,215 699,230 710,236 712,243 722,250 725,243 731,243 729,225 722,212 717,202 727,195 733,183",
  "858,227 843,232 835,242 824,258 819,277 815,290 824,276 830,259 842,246 858,241",
  "645,300 653,290 672,294 677,302 687,306 690,319 672,309 652,300",
  "698,326 708,321 728,323 739,340 725,337 722,350 724,366 738,364 748,358 768,338 775,342 760,352 735,373 718,383 708,370 715,350",
  "541,237 545,231 546,221 552,221 550,231 552,240 560,250 565,270 561,275 558,264 553,253 546,248", "558,230 561,225 566,227 571,234 573,243 577,252 578,264 575,268 571,256 565,246 560,240", "644,274 648,272 653,274 653,284 646,281",
  "527,190 534,182 540,183 531,190",
];
const LAND = [
  "308,218 321,228 330,244 339,258 337,262 323,250 314,232",
  "728,650 735,637 752,628 778,625 790,627 815,632 835,640 858,642 858,653 836,654 825,661 829,652 808,643 800,636 782,637 765,633 748,638",
  "820,681 832,677 848,681 840,685 828,686", "750,645 757,645 756,651 749,649", "803,592 809,598 812,607 807,604", "699,215 703,225 711,229 711,231 699,229",
  "840,262 850,259 858,260 858,264",
];

const MapView = () => (
  <svg width="570" height="537" viewBox="288 183 570 537">
    <defs><clipPath id="usa"><polygon points={OUTLINE} /></clipPath></defs>
    <rect x="288" y="183" width="570" height="537" fill="#3f3f41" />
    {WATER.map(p => <polygon key={p} points={p} fill="#222327" />)}
    {LAND.map(p => <polygon key={p} points={p} fill="#3d3d3f" />)}
    <path d="M795 575l16-7 5 2-1 6M830 585l8 7M848 606l5 6M792 315l6-9 14-7" stroke="#36363a" fill="none" />
    <path d="M651 710v10M651 708h29l1 12" stroke="#363638" fill="none" />
    <polygon points={OUTLINE} fill="#f7f8f3" />
    <g clipPath="url(#usa)">
      {Object.entries(COUNTIES.fills).map(([k, d]) => <path key={k} d={d} fill={CLASS[k]} />)}
      <path d={COUNTIES.lines} fill="none" stroke="#bfbfbd" strokeWidth=".48" />
      {PATCHES.map(([c, p]) => <polygon key={p} points={p} fill={CLASS[c]} stroke="#bdbdbb" strokeWidth=".4" />)}
      <path d={PATCH_LINES} fill="none" stroke="#bdbdbb" strokeWidth=".7" />
    </g>
    <polygon points={OUTLINE} fill="none" stroke="#000" strokeWidth="1.3" strokeLinejoin="round" />
    {BORDERS.map(p => <polyline key={p} points={p} fill="none" stroke="#000" strokeWidth="1.25" strokeLinejoin="round" />)}
    <path d="m759 607 8-4 2 1-7 4z" fill="#eee" stroke="#000" strokeWidth=".6" />
    <path d="M312 457l12 2M319 470l5 1M329 474l3 4M747 608l2 1" stroke="#000" strokeWidth="1.5" />
    <MapText x="514" y="211" $s={10} $ls={5} transform="rotate(2 514 211)">CANADA</MapText>
    <MapText x="477" y="631" transform="rotate(4 477 631)">MÉXICO</MapText>
    <MapText x="787" y="644" $ls={0.5} transform="rotate(-9 787 644)">CUBA</MapText>
    <MapText $c="#5d5d60" x="631" y="608" $i $ls={0.8} transform="rotate(-3 631 608)">Gulf of</MapText>
    <MapText $c="#5d5d60" x="633" y="626" $i $ls={0.8} transform="rotate(-2 633 626)">Mexico</MapText>
    <MapText $c="#5d5d60" x="835" y="722" $i $ls={1} transform="rotate(-8 835 722)">Car</MapText>
    <path d="M831 697v-2h7v2h12v14h-3v-2h-4v2h-5v-2h-3v2h-4z" fill="#fff" /><path d="M834 701.5h13M834 705.5h13" stroke="#555" strokeWidth="1.1" />
  </svg>
);

const TABS = [["Project", 18, 40], ["Map", 36, 27], ["Insert", 32, 32], ["Analysis", 33, 49], ["View", 31, 27], ["Edit", 32, 22], ["Imagery", 34, 47], ["Share", 33, 33], ["Help", 32, 27]];
const LEGEND = [["c99", "Cold Spot with 99% Confidence"], ["c95", "Cold Spot with 95% Confidence"], ["c90", "Cold Spot with 90% Confidence"], ["ns", "Not Significant"], ["h90", "Hot Spot with 90% Confidence"], ["h95", "Hot Spot with 95% Confidence"], ["h99", "Hot Spot with 99% Confidence"]];

const Small = ({ icon, text, w, tm, off, more }) => (
  <SmallButton $off={off} $tw={w ? w + "px" : undefined} $tm={tm}>{icon}<span>{text}</span>{more && <Chev />}</SmallButton>
);
const Layer = ({ name, open, on = true }) => (
  <Node $in={14}><Twist>{open === true ? <Open /> : open === false ? <Shut /> : null}</Twist><Check>{on && <Tick />}</Check>{name}</Node>
);

export default function App() {
  return (
    <>
      <Global />
      <Window>
        <TitleBar>
          <Quick $w={28}><NewProject /></Quick><Quick $w={29}><OpenProject /></Quick><Quick $w={26}><SaveProject /></Quick>
          <Quick $w={21}><Undo /></Quick><Quick $w={16}><Chev /></Quick><Quick $w={21}><Undo flip c="#b4d6ee" /></Quick><Quick $w={23}><Chev /></Quick>
          <Quick $w={133}><Svg s={9} vb="0 0 9 9"><path d="M.5 1.500h8M1 4l3.500 3.500L8 4" stroke="#444" strokeWidth="1.2" /></Svg></Quick>
          <ProjectName>PatternDetection_SpaceTime</ProjectName>
          <Search />
          <Portal>{"AHAM - Spatial Data Science:  The New Frontier in Analytics"}</Portal>
          <Avatar>AA</Avatar>
          <WinButton $w={47}><Svg s={18} vb="0 0 18 18"><path d="M3 14h12l-2-3V8a4 4 0 0 0-8 0v3zM7.500 16.500h3" stroke={G} strokeWidth="1.2" /><circle cx="11.500" cy="6" r="5.200" fill="#007ac2" /></Svg></WinButton>
          <WinButton $w={27}><Svg s={10} h={13} vb="0 0 10 13"><path d="M1.800 3.500C2 .2 8 .2 8 3.500 8 6 5 6 5 9M5 10.500V12" stroke="#6b6b6b" strokeWidth="1.2" /></Svg></WinButton>
          <WinButton $w={61}><Svg s={11}><path d="M0 8h16" stroke="#333" strokeWidth="1.5" /></Svg></WinButton>
          <WinButton $w={27}><Svg s={11} vb="0 0 11 11"><path d="M.500.500h10v10H.500z" stroke="#333" /></Svg></WinButton>
          <WinButton $w={61}><Close s={11} /></WinButton>
        </TitleBar>
        <TabStrip>
          {TABS.map(([t, g, w]) => <Tab key={t} $gap={g} $w={w} $on={t === "Analysis"}>{t}</Tab>)}
          <ContextTabs><ContextTab $gap={17} $w={78}>Feature Layer</ContextTab><ContextTab $gap={33} $w={49}>Labeling</ContextTab><ContextTab $gap={32} $w={27}>Data</ContextTab></ContextTabs>
        </TabStrip>
        <Ribbon>
          <Group $w={261}>
            <GroupBody>
              <BigButton $w={58}><History /><BigText $t={4}>History</BigText></BigButton>
              <Column $ml={-4} $w={98}>
                <Small icon={<Model />} text="ModelBuilder" /><Small icon={<Python />} text="Python" w={46} more /><Small icon={<Env />} text="Environments" />
              </Column>
              <BigButton $w={63}><Ready /><BigText $t={4}>Ready To{"\n"}Use Tools<Chev s={7} /></BigText></BigButton>
              <BigButton $w={39}><Toolbox /><BigText $t={4}>Tools</BigText></BigButton>
            </GroupBody>
            <GroupName $shift={15}>Geoprocessing</GroupName>
            <Launcher><Svg s={9} vb="0 0 9 9"><path d="M8.500 3V.5h-8v8H3M3.500 3.500l5 5M8.500 5v3.500H5" stroke="#555" /></Svg></Launcher>
          </Group>
          <Group $w={65}>
            <GroupBody><BigButton $w={65}><Hammer /><BigText $t={4} $lh={11}>Analysis{"\n"}Gallery<Chev s={7} /></BigText></BigButton></GroupBody>
            <GroupName>Tools</GroupName>
          </Group>
          <Group $w={131}>
            <GroupBody><BigButton $ml={8} $w={57}><Feature /><BigText>Feature{"\n"}Analysis<Chev s={7} /></BigText></BigButton><BigButton $w={58}><Raster /><BigText>Raster{"\n"}Analysis<Chev s={7} /></BigText></BigButton></GroupBody>
            <GroupName>Portal</GroupName>
          </Group>
          <Group $w={437}>
            <GroupBody>
              <Column $ml={10} $w={126}><Small icon={<DataEng />} text="Data Engineering" /><Small icon={<Suit />} text="Suitability Modeler" /><Small icon={<Visib />} text="Visibility Analysis" /></Column>
              <Column $w={166}><Small icon={<Explore />} text="Exploratory 3D Analysis" w={131} more /><Small icon={<Network />} text="Network Analysis" tm={5} w={95} more /><Small icon={<Geostat />} text="Geostatistical Wizard" /></Column>
              <Column $w={130}><Small icon={<Business />} text="Business Analysis" w={95} more /><Small off icon={<Interop />} text="Data Interop" tm={3} w={73} more /></Column>
            </GroupBody>
            <GroupName>Workflows</GroupName>
          </Group>
          <Group $w={144}>
            <GroupBody><Column $ml={10} $w={130}><Small icon={<RFun />} text="Raster Functions" w={95} more /><Small icon={<FEd />} text="Function Editor" /></Column></GroupBody>
            <GroupName>Raster</GroupName>
          </Group>
          <Collapse><Svg s={11} h={8} vb="0 0 11 8"><path d="m1 6.500 4.500-4.500L10 6.500" stroke="#333" strokeWidth="1.5" /></Svg></Collapse>
        </Ribbon>

        <Workspace>
          <Contents>
            <PaneHead $r={7}><PaneTitle>Contents</PaneTitle><HeadIcons><Chev s={9} /><Pin /><Close /></HeadIcons></PaneHead>
            <SearchRow><Filter /><SearchBox><span>Search</span><Search s={12} flip /><Chev s={9} /></SearchBox></SearchRow>
            <ViewTabs><ViewTab $on><Layers /></ViewTab><ViewTab><Cyl /></ViewTab><ViewTab><Sel /></ViewTab><ViewTab><Pencil /></ViewTab><ViewTab><GridAdd /></ViewTab><ViewTab><Tag /></ViewTab><ViewTab><Sat /></ViewTab></ViewTabs>
            <OrderTitle>Drawing Order</OrderTitle>
            <Tree>
              <Node $in={1} $h={28}><Twist><Open /></Twist><Node $in={2} $g={5}><MapIcon />Pattern Detection</Node></Node>
              <Layer name="US_States" open={false} />
              <Layer name="SNAPHotSpots" open />
              <SubHead>Gi_Bin</SubHead>
              {LEGEND.map(([c, t]) => <Legend key={c}><Swatch $c={CLASS[c]} />{t}</Legend>)}
              <Charts>Charts</Charts>
              <HistRow><Hist />Histogram of SNAPRate</HistRow>
              <Node $in={14}><Twist><Shut /></Twist><Selected><Check><Tick /></Check>US_Counties</Selected></Node>
              <Layer name="World Dark Gray Canvas Base" />
              <Layer name="World Dark Gray Reference" on={false} />
            </Tree>
          </Contents>

          <MapPane>
            <DocTabs><DocTab><MapIcon /><span>Pattern Detection</span><Close /></DocTab><Chev s={9} /></DocTabs>
            <Canvas><MapView /></Canvas>
            <Status>
              <Scale>1:31,140,738<Svg s={6} vb="0 0 6 6"><path d="M.5 1.500h5L3 4.500z" fill="#444" /></Svg></Scale>
              <Sep $r={5} />
              <Tools><GridAdd s={17} /><GridI /><Snap /><Cross /><North /><Chev s={10} w={1.4} c="#222" /></Tools>
              <Sep $l={10} />
              <Coords>1,796,175.42E 1,499,559.29S m</Coords><Chev s={10} w={1.5} />
              <Sep $l={15} $r={7} />
              <Tools><Svg s={16}><circle cx="5.500" cy="9.500" r="4" fill="#dceefa" stroke="#9ac8e6" /><path d="M5.500 7.500v4M3.500 9.500h4M9 13l3 3M7 4V1h8v9h-4M9 2l3 4 3-4" stroke="#a3b4be" /></Svg><Count>0</Count></Tools>
              <Sep $l={5} $r={9} />
              <Svg s={12} vb="0 0 12 12"><path d="M.5.5h11v11H.5zM3 1l3 5 5-3M6 6l2 5" stroke="#aaa" /></Svg>
              <Sep $l={9} $r={8} />
              <Svg s={11} h={14} vb="0 0 11 14"><path d="M0 0h4v14H0zM7 0h4v14H7z" fill="#6b6b6b" /></Svg>
              <Sep $l={9} $r={6} />
              <Refresh />
            </Status>
          </MapPane>

          <Dock>
            <Geo>
              <PaneHead $r={7}><PaneTitle $c="#007ac2">Geoprocessing</PaneTitle><HeadIcons><Chev s={9} /><Pin /><Close /></HeadIcons></PaneHead>
              <ToolRow><Round d="M13.500 9h-9M8.500 5l-4 4 4 4" />Optimized Outlier Analysis<Round d="M9 4v10M4 9h10" /></ToolRow>
              <ParamTabs><ParamTab $on $w={69}>Parameters</ParamTab><ParamTab $w={80}>Environments</ParamTab><Svg s={16}><circle cx="8" cy="8" r="7.400" fill="#dcedf8" stroke="#4da3d8" /><path d="M5.800 6.300c0-3 4.500-3 4.500 0C10.300 8 8 8 8 10M8 11v1.500" stroke="#3c97d3" strokeWidth="1.2" /></Svg></ParamTabs>
              <Form>
                <FieldName>Input Features</FieldName>
                <FieldRow><Input $w={242}>US_Counties<Chev /></Input><Folder /></FieldRow>
                <FieldName>Output Features</FieldName>
                <FieldRow><Input $w={242} $up $c="#4b4b4b">SNAPOutliers</Input><Folder /></FieldRow>
                <FieldName>Analysis Field</FieldName>
                <FieldRow $g={4}><Input $w={244}>SNAPRate<Chev /></Input><Gear /></FieldRow>
                <FieldName>Performance Adjustment</FieldName>
                <FieldRow><Input $w={268}>Balanced (499 permutations)<Chev /></Input></FieldRow>
                <Section><Chev s={9} w={1.6} />Override Settings</Section>
                <FieldName>Distance Band</FieldName>
                <FieldRow $g={4}><Input $w={130} $end $up $c="#4b4b4b">75</Input><Input $w={134} $tight $c="#4b4b4b">Kilometers<Chev /></Input></FieldRow>
              </Form>
              <RunRow><Run><Play />Run</Run><RunMore><Chev /></RunMore></RunRow>
              <Job>
                <Play />
                <JobText>Optimized Outlier Analysis<br />Running...<Progress><i /></Progress><Links><span>View Details</span><span>Open History</span></Links></JobText>
                <Stop><i /></Stop>
                <Watermark>Activate Windows<small>Go to Settings to activate Windows.</small></Watermark>
              </Job>
            </Geo>
            <DockTabs><DockTab $w={53}>Catalog</DockTab><DockTab $on $w={90}>Geoprocessing</DockTab><DockTab $w={50}>History</DockTab></DockTabs>
          </Dock>
        </Workspace>
      </Window>
    </>
  );
}
